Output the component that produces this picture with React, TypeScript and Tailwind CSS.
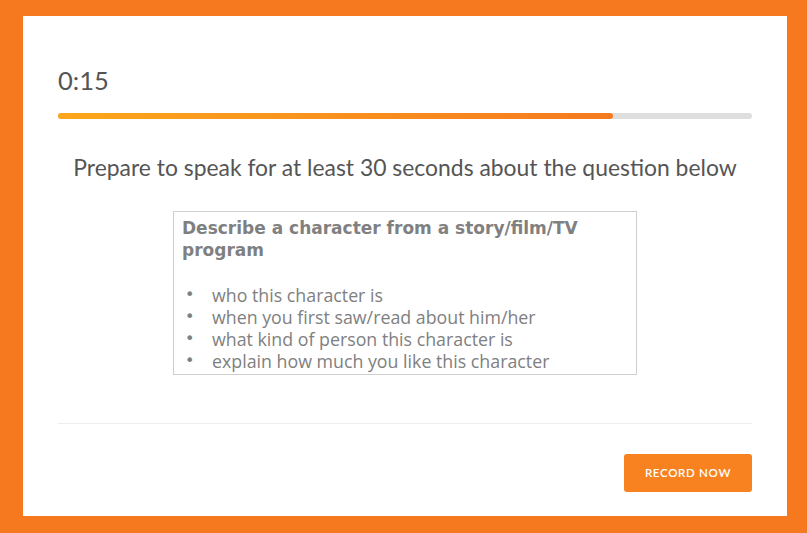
export default function App() {
  const bullets = [
    "who this character is",
    "when you first saw/read about him/her",
    "what kind of person this character is",
    "explain how much you like this character",
  ];
  return (
    <div className="h-[533px] w-[807px] bg-[#f7791f] pb-[17px] pl-[23px] pr-[20px] pt-[16px]">
      <div className="flex h-full flex-col bg-white px-[35px] font-['Lato',sans-serif]">
        <div className="pt-[49px] text-[25.5px] leading-[30px] text-[#555]">0:15</div>
        <div className="mt-[18px] h-[6px] w-full rounded-full bg-[#dedede]">
          <div className="h-full w-[80%] rounded-full bg-gradient-to-r from-[#fba61b] to-[#f57a1f]" />
        </div>
        <p className="mt-[34px] text-center text-[22.9px] leading-[28px] text-[#555]">
          Prepare to speak for at least 30 seconds about the question below
        </p>
        <div className="mx-auto mt-[30px] w-[464px] border border-[#cfcfcf] pb-[2px] pl-[8px] pr-[8px] pt-[5px] text-[#808080]">
          <p className="font-['DejaVu_Sans',sans-serif] text-[17px] font-bold leading-[22px]">
            Describe a character from a story/film/TV program
          </p>
          <ul className="mt-[23px] font-['Open_Sans',sans-serif] text-[17.8px] leading-[22px]">
            {bullets.map((b) => (
              <li key={b} className="flex items-center">
                <span className="w-[30px] shrink-0 pl-[3px] font-['DejaVu_Sans',sans-serif] text-[16px]">•</span>
                <span>{b}</span>
              </li>
            ))}
          </ul>
        </div>
        <div className="mt-[48px] h-px w-full bg-[#eeeeee]" />
        <div className="mt-[30px] flex justify-end">
          <button className="h-[38px] w-[128px] rounded-[3px] bg-[#f7821f] text-[11.5px] font-semibold tracking-[0.06em] text-white">
            RECORD NOW
          </button>
        </div>
      </div>
    </div>
  );
}
